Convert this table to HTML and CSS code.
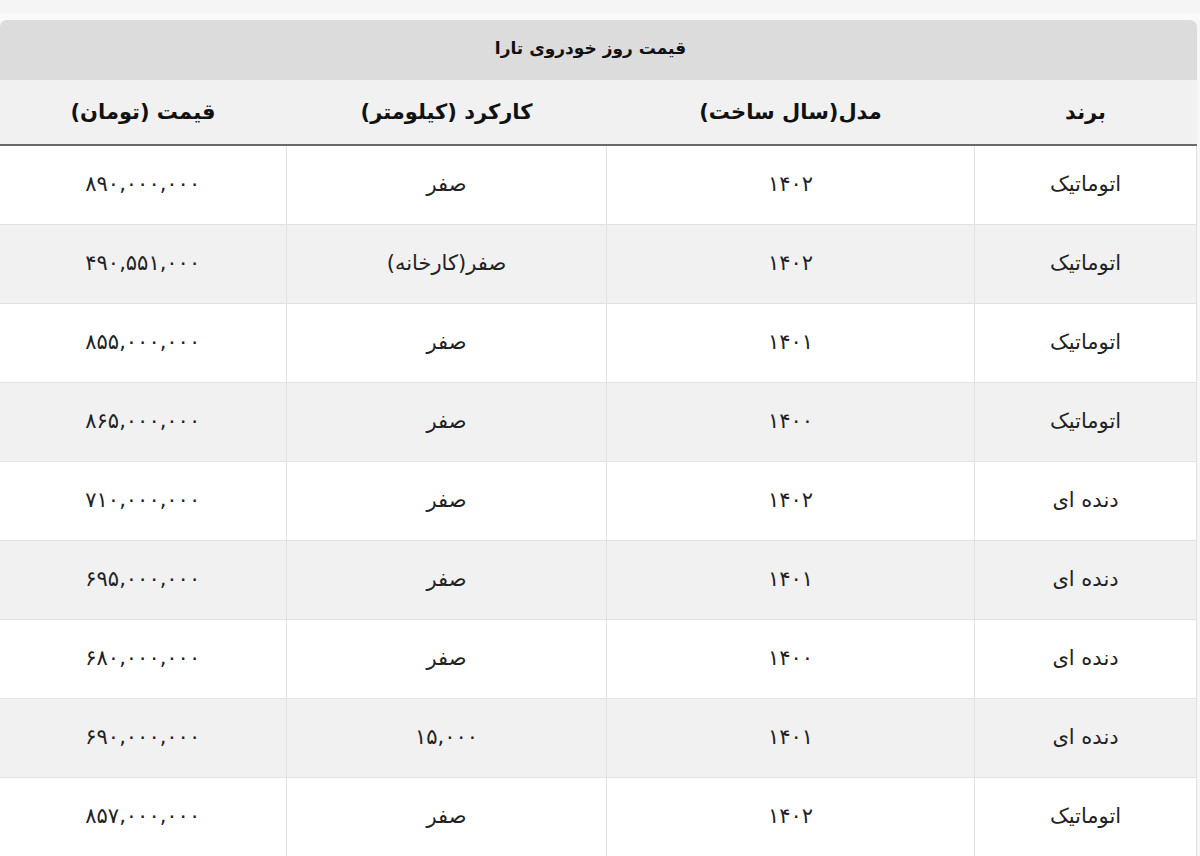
FILE: index.html
```html
<!DOCTYPE html>
<html lang="fa" dir="rtl">
<head>
<meta charset="utf-8">
<title>قیمت روز خودروی تارا</title>
<link rel="stylesheet" href="styles.css">
</head>
<body>
<div class="topstrip"></div>
<div class="topline"></div>
<div class="wrap">
  <div class="caption">قیمت روز خودروی تارا</div>
  <table class="price">
    <colgroup>
      <col class="c1"><col class="c2"><col class="c3"><col class="c4">
    </colgroup>
    <thead>
      <tr><th>برند</th><th>مدل(سال ساخت)</th><th>کارکرد (کیلومتر)</th><th>قیمت (تومان)</th></tr>
    </thead>
    <tbody>
      <tr><td>اتوماتیک</td><td>۱۴۰۲</td><td>صفر</td><td>۸۹۰,۰۰۰,۰۰۰</td></tr>
      <tr><td>اتوماتیک</td><td>۱۴۰۲</td><td>صفر(کارخانه)</td><td>۴۹۰,۵۵۱,۰۰۰</td></tr>
      <tr><td>اتوماتیک</td><td>۱۴۰۱</td><td>صفر</td><td>۸۵۵,۰۰۰,۰۰۰</td></tr>
      <tr><td>اتوماتیک</td><td>۱۴۰۰</td><td>صفر</td><td>۸۶۵,۰۰۰,۰۰۰</td></tr>
      <tr><td>دنده ای</td><td>۱۴۰۲</td><td>صفر</td><td>۷۱۰,۰۰۰,۰۰۰</td></tr>
      <tr><td>دنده ای</td><td>۱۴۰۱</td><td>صفر</td><td>۶۹۵,۰۰۰,۰۰۰</td></tr>
      <tr><td>دنده ای</td><td>۱۴۰۰</td><td>صفر</td><td>۶۸۰,۰۰۰,۰۰۰</td></tr>
      <tr><td>دنده ای</td><td>۱۴۰۱</td><td>۱۵,۰۰۰</td><td>۶۹۰,۰۰۰,۰۰۰</td></tr>
      <tr><td>اتوماتیک</td><td>۱۴۰۲</td><td>صفر</td><td>۸۵۷,۰۰۰,۰۰۰</td></tr>
    </tbody>
  </table>
</div>
</body>
</html>
```

FILE: styles.css
```css
html, body {
  margin: 0;
  padding: 0;
  background: #f7f7f7;
}
body {
  font-family: "DejaVu Sans", "Noto Sans", sans-serif;
  color: #222;
  width: 1200px;
  height: 856px;
  overflow: hidden;
}
.topstrip {
  height: 13px;
  background: #f5f5f5;
}
.topline {
  height: 7px;
  background: #fafafa;
}
.wrap {
  width: 1197px;
  margin-right: 3px;
}
.caption {
  height: 60px;
  line-height: 56px;
  padding-right: 16px;
  background: #dcdcdc;
  border-radius: 7px 7px 0 0;
  text-align: center;
  font-weight: bold;
  font-size: 17px;
  color: #111;
}
.price {
  width: 1197px;
  border-collapse: collapse;
  table-layout: fixed;
  background: #fff;
}
.c1 { width: 222px; }
.c2 { width: 368px; }
.c3 { width: 320px; }
.c4 { width: 287px; }
.price th {
  height: 64px;
  padding: 0;
  background: #f1f1f1;
  font-size: 21px;
  font-weight: bold;
  color: #111;
  border-bottom: 2px solid #6a6a6a;
  text-align: center;
  vertical-align: middle;
}
.price td {
  height: 75px;
  padding: 0 0 3px 0;
  font-size: 21px;
  text-align: center;
  vertical-align: middle;
  border: 1px solid #e2e2e2;
  border-top: 0;
  box-sizing: content-box;
}
.price tbody tr:nth-child(even) td {
  background: #f1f1f1;
}
.price td:last-child {
  border-left: 0;
}
```
